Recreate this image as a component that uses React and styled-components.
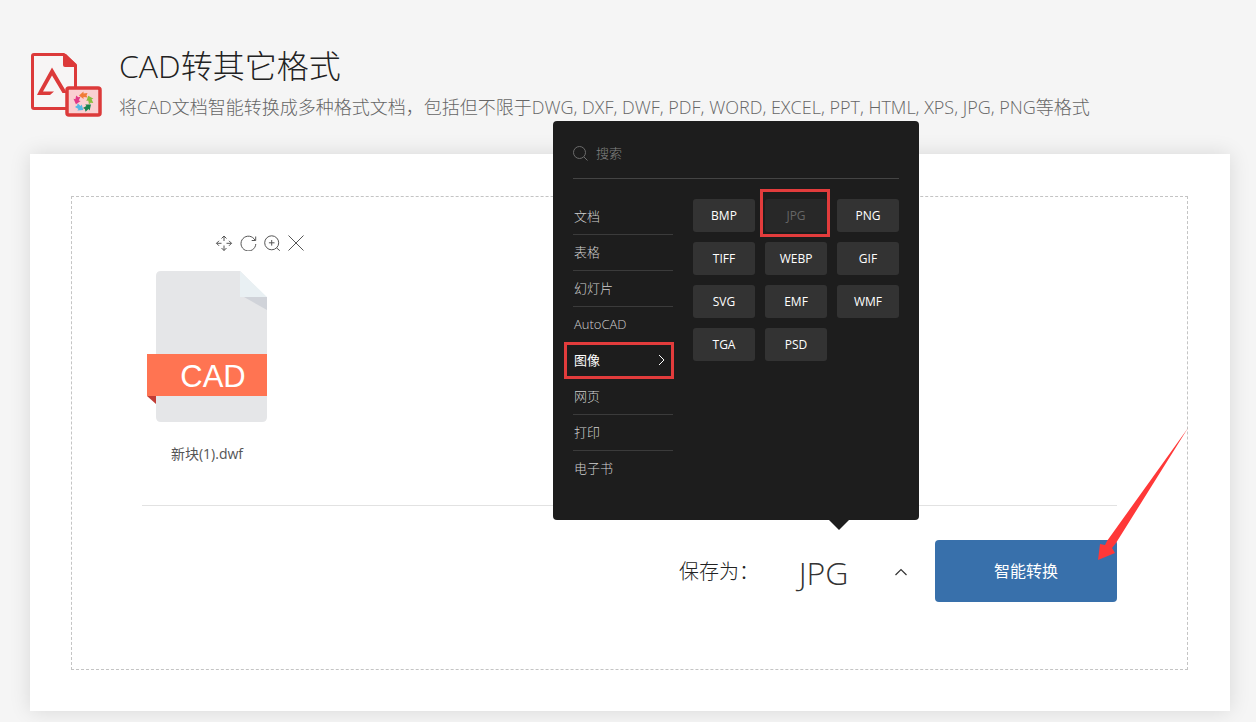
import React, { useState } from "react";
import styled, { createGlobalStyle } from "styled-components";

const colors = {
  page: "#f5f5f5",
  panel: "#1d1d1d",
  primary: "#3870ab",
  mark: "#e23c3c",
};

const GlobalStyle = createGlobalStyle`
  * {
    box-sizing: border-box;
  }
  body {
    margin: 0;
    background: ${colors.page};
    color: #222222;
    font-family: "Open Sans", "Noto Sans CJK SC", sans-serif;
  }
  button, input {
    font-family: inherit;
  }
`;

const Page = styled.div`
  padding: 0 26px 11px 30px;
`;
const Header = styled.header`
  display: flex;
  align-items: flex-end;
  gap: 16px;
  padding: 44px 0 35px;
`;
const Title = styled.h1`
  margin: 0 0 7px;
  font-size: 32px;
  font-weight: 300;
  line-height: 44px;
`;
const Subtitle = styled.p`
  margin: 0;
  font-size: 18px;
  font-weight: 300;
  line-height: 24px;
  color: #666666;
`;
const Card = styled.main`
  padding: 42px 42px 41px 41px;
  background: #ffffff;
  box-shadow: 0 0 20px rgba(0, 0, 0, 0.12);
`;
const DropZone = styled.section`
  padding: 38px 70px 67px;
  border: 1px dashed #c4c4c4;
`;
const FileTile = styled.div`
  display: flex;
  flex-direction: column;
  width: 163px;
`;
const FileTools = styled.div`
  display: flex;
  justify-content: flex-end;
  gap: 6px;
  margin-bottom: 20px;
`;
const ToolButton = styled.button`
  display: flex;
  width: 18px;
  height: 16px;
  padding: 0;
  border: none;
  background: none;
  color: #555555;
  cursor: pointer;
`;
const FileArt = styled.svg`
  width: 130px;
  height: 151px;
`;
const FileName = styled.div`
  width: 130px;
  margin-top: 22px;
  font-size: 14px;
  line-height: 20px;
  text-align: center;
  color: #555555;
`;
const Actions = styled.div`
  display: flex;
  align-items: center;
  justify-content: flex-end;
  margin-top: 41px;
  padding-top: 34px;
  border-top: 1px solid #e2e2e2;
`;
const SaveLabel = styled.span`
  padding-bottom: 2px;
  font-size: 20px;
  font-weight: 300;
`;
const Picker = styled.div`
  position: relative;
  width: 160px;
  margin-right: 16px;
`;
const PickerButton = styled.button`
  display: flex;
  align-items: center;
  width: 100%;
  height: 62px;
  padding: 2px 11px 0 0;
  border: none;
  background: none;
  font-size: 32px;
  font-weight: 300;
  color: #333333;
  cursor: pointer;
`;
const PickerValue = styled.span`
  flex: 1;
  padding-right: 6px;
`;
const ConvertButton = styled.button`
  width: 182px;
  height: 62px;
  padding: 0 0 2px;
  border: none;
  border-radius: 4px;
  background: ${colors.primary};
  font-size: 16px;
  color: #ffffff;
  cursor: pointer;
  &:hover {
    background: #2f639b;
  }
`;
const ConvertWrapper = styled.div`
  position: relative;
`;
const Pointer = styled.svg`
  position: absolute;
  right: -71px;
  bottom: 42px;
  width: 90px;
  height: 132px;
  pointer-events: none;
`;

const Popup = styled.div`
  position: absolute;
  right: 0;
  bottom: 82px;
  width: 366px;
  padding: 7px 20px 33px;
  border-radius: 4px;
  background: ${colors.panel};
  &::after {
    content: "";
    position: absolute;
    top: 100%;
    right: 70px;
    border: 10px solid transparent;
    border-top-color: ${colors.panel};
    border-bottom: none;
  }
`;
const Search = styled.label`
  display: flex;
  align-items: center;
  gap: 8px;
  height: 51px;
  margin-bottom: 20px;
  border-bottom: 1px solid #444444;
  color: #6c6c6c;
`;
const SearchInput = styled.input`
  flex: 1;
  min-width: 0;
  padding: 0;
  border: none;
  outline: none;
  background: none;
  font-size: 13px;
  font-weight: 300;
  color: #ffffff;
  &::placeholder {
    color: #858585;
  }
`;
const Choices = styled.div`
  display: flex;
  align-items: flex-start;
  gap: 20px;
`;
const Categories = styled.div`
  display: flex;
  flex-direction: column;
  width: 100px;
`;
const Category = styled.button`
  position: relative;
  display: flex;
  align-items: center;
  justify-content: space-between;
  height: 36px;
  padding: 0 8px 2px 1px;
  border: none;
  border-bottom: 1px solid #3b3b3b;
  background: none;
  font-size: 13px;
  font-weight: ${props => (props.$active ? 400 : 300)};
  color: ${props => (props.$active ? "#ffffff" : "#d0d0d0")};
  cursor: pointer;
  &:last-child {
    border-bottom-color: transparent;
  }
`;
const Formats = styled.div`
  flex: 1;
  display: grid;
  grid-template-columns: repeat(3, 1fr);
  gap: 10px;
`;
const Format = styled.button`
  position: relative;
  height: 33px;
  padding: 0;
  border: none;
  border-radius: 3px;
  background: ${props => (props.$active ? "#282828" : "#333333")};
  font-size: 12px;
  color: ${props => (props.$active ? "#666666" : "#ffffff")};
  cursor: pointer;
`;
const Mark = styled.span`
  position: absolute;
  inset: ${props => props.$inset};
  border: 3px solid ${colors.mark};
  pointer-events: none;
`;

const categories = [
  "文档",
  "表格",
  "幻灯片",
  "AutoCAD",
  "图像",
  "网页",
  "打印",
  "电子书",
];
const formats = [
  "BMP",
  "JPG",
  "PNG",
  "TIFF",
  "WEBP",
  "GIF",
  "SVG",
  "EMF",
  "WMF",
  "TGA",
  "PSD",
];
const tools = [
  {
    label: "移动",
    path:
      "M9 6V1M6.500 3.500 9 1l2.500 2.500M9 10.500v5M6.500 13 9 15.500l2.500-2.500M6.500 8.300h-5M4 5.800 1.500 8.300 4 10.800M11.500 8.300h5M14 5.800l2.500 2.500L14 10.800",
  },
  {
    label: "旋转",
    path: "M16 5.200A7.400 7.400 0 1 0 16.800 9M16.700 1.500V5.500H12.700",
  },
  {
    label: "放大",
    path:
      "M15.700 7.800a7 7 0 1 1-14 0a7 7 0 1 1 14 0M13.500 12.800l3.300 2.900M8.700 5v5.600M5.900 7.800h5.600",
  },
  { label: "删除", path: "M1.500.5 16.500 15.500M16.500.5 1.500 15.500" },
];

const HeaderIcon = () => (
  <svg width="73" height="68" viewBox="0 0 73 68" aria-hidden="true">
    <path
      d="M4 3.500H34L45.500 14V57.500H4Q2.500 57.500 2.500 56V5Q2.500 3.500 4 3.500Z"
      fill="#f7f5f5"
      stroke="#dc3a3a"
      strokeWidth="3"
      strokeLinejoin="round"
    />
    <path d="M33 3H36L46 13V16H35Q33 16 33 14Z" fill="#dc3a3a" />
    <path
      d="M22 16.500 37 42H32.500L22 24.500 13 40.500H24L20 44H7L9 40Z"
      fill="#dc3a3a"
    />
    <rect
      x="37"
      y="37"
      width="33"
      height="27"
      rx="2"
      fill="#fad0d2"
      stroke="#dc3a3a"
      strokeWidth="3.500"
    />
    {["#f17b38", "#8abf3f", "#16834f", "#55b8e5", "#e23a88"].map((fill, i) => (
      <path
        key={fill}
        d="M-4.500-6.500 0-10.500V-8.500L4-9 3-6.500 4-4.500 0-5V-3Z"
        fill={fill}
        transform={`translate(53.500 51) rotate(${i * 72})`}
      />
    ))}
  </svg>
);

const Document = () => (
  <FileArt viewBox="0 0 130 151" role="img" aria-label="CAD">
    <path
      d="M19 0H98L125 27V146Q125 151 120 151H19Q14 151 14 146V5Q14 0 19 0Z"
      fill="#e5e6e8"
    />
    <path d="M102 26H125V39Z" fill="#d0d3d9" />
    <path d="M98 0 125 26H98Z" fill="#e9f0f3" />
    <path d="M5 83H125V125H5Z" fill="#ff7452" />
    <path d="M5 125H14V133Z" fill="#c13c35" />
    <text
      x="71"
      y="116"
      textAnchor="middle"
      fontFamily="Liberation Sans, sans-serif"
      fontSize="31"
      fill="#ffffff"
    >
      CAD
    </text>
  </FileArt>
);

const FormatPicker = ({ value, onChange }) => {
  const [open, setOpen] = useState(true);
  const [category, setCategory] = useState("图像");
  return (
    <Picker>
      <PickerButton
        aria-labelledby="save-as"
        aria-expanded={open}
        onClick={() => setOpen(!open)}
      >
        <PickerValue>{value}</PickerValue>
        <svg width="14" height="8" viewBox="0 0 14 8" fill="none">
          <path d="M1.500 7 7 1.500l5.500 5.500" stroke="#333333" strokeWidth="1.200" />
        </svg>
      </PickerButton>
      {open && (
        <Popup>
          <Search>
            <svg width="15" height="15" viewBox="0 0 15 15" fill="none">
              <circle cx="6.500" cy="6.500" r="6" stroke="currentColor" />
              <path d="M11 11l3.500 3.500" stroke="currentColor" />
            </svg>
            <SearchInput type="text" placeholder="搜索" aria-label="搜索" />
          </Search>
          <Choices>
            <Categories>
              {categories.map(name => (
                <Category
                  key={name}
                  $active={name === category}
                  onClick={() => setCategory(name)}
                >
                  {name}
                  {name === category && (
                    <>
                      <svg width="7" height="12" viewBox="0 0 7 12" fill="none">
                        <path d="M1 1l5 5-5 5" stroke="#ffffff" />
                      </svg>
                      <Mark $inset="-1px -1px -1px -9px" />
                    </>
                  )}
                </Category>
              ))}
            </Categories>
            <Formats>
              {formats.map(name => (
                <Format
                  key={name}
                  $active={name === value}
                  onClick={() => onChange(name)}
                >
                  {name}
                  {name === value && <Mark $inset="-10px -3px -5px -5px" />}
                </Format>
              ))}
            </Formats>
          </Choices>
        </Popup>
      )}
    </Picker>
  );
};

const App = () => {
  const [format, setFormat] = useState("JPG");
  return (
    <Page>
      <GlobalStyle />
      <Header>
        <HeaderIcon />
        <div>
          <Title>CAD转其它格式</Title>
          <Subtitle>
            将CAD文档智能转换成多种格式文档，包括但不限于DWG, DXF, DWF, PDF,
            WORD, EXCEL, PPT, HTML, XPS, JPG, PNG等格式
          </Subtitle>
        </div>
      </Header>
      <Card>
        <DropZone>
          <FileTile>
            <FileTools>
              {tools.map(tool => (
                <ToolButton key={tool.label} aria-label={tool.label}>
                  <svg width="18" height="16" viewBox="0 0 18 16" fill="none">
                    <path d={tool.path} stroke="currentColor" />
                  </svg>
                </ToolButton>
              ))}
            </FileTools>
            <Document />
            <FileName>新块(1).dwf</FileName>
          </FileTile>
          <Actions>
            <SaveLabel id="save-as">保存为：</SaveLabel>
            <FormatPicker value={format} onChange={setFormat} />
            <ConvertWrapper>
              <ConvertButton>智能转换</ConvertButton>
              <Pointer viewBox="0 0 90 132" aria-hidden="true">
                <path
                  d="M0 132 2 116 7 117 9 113 90 0 18 115 14 120 17 125Z"
                  fill="#ff3838"
                />
              </Pointer>
            </ConvertWrapper>
          </Actions>
        </DropZone>
      </Card>
    </Page>
  );
};

export default App;
